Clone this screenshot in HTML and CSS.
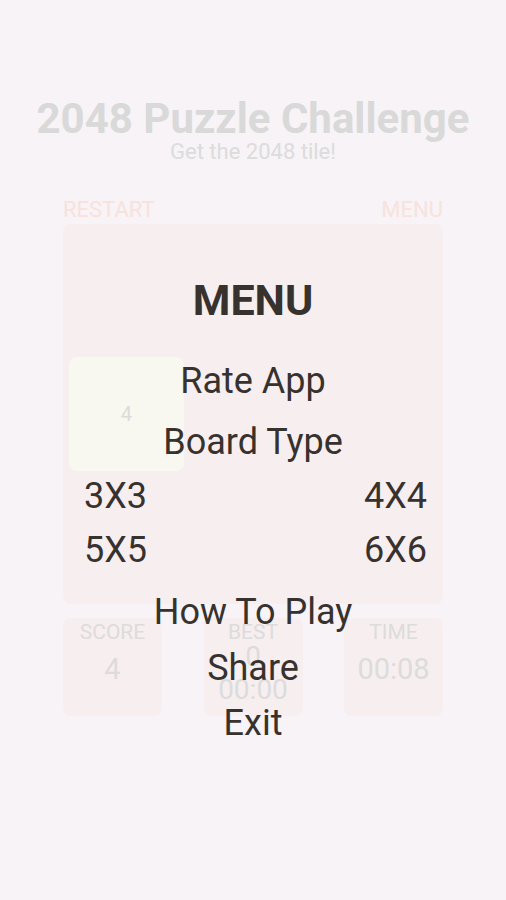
FILE: index.html
```html
<!DOCTYPE html>
<html lang="en">
<head>
  <meta charset="UTF-8">
  <meta name="viewport" content="width=device-width, initial-scale=1.0">
  <title>2048 Puzzle Challenge</title>
  <link rel="stylesheet" href="styles.css">
</head>
<body>

<div class="game">
  <h1 class="title">2048 Puzzle Challenge</h1>
  <div class="subtitle">Get the 2048 tile!</div>

  <!-- top buttons -->
  <div class="actions">
    <span class="action">RESTART</span>
    <span class="action">MENU</span>
  </div>

  <!-- board -->
  <div class="board">
    <div class="cell"></div>
    <div class="cell"></div>
    <div class="cell"></div>
    <div class="cell tile">4</div>
    <div class="cell"></div>
    <div class="cell"></div>
    <div class="cell"></div>
    <div class="cell"></div>
    <div class="cell"></div>
  </div>

  <!-- stats -->
  <div class="stats">
    <div class="stat">
      <div class="stat-label">SCORE</div>
      <div class="stat-value">4</div>
    </div>
    <div class="stat">
      <div class="stat-label">BEST</div>
      <div class="stat-small">0</div>
      <div class="stat-small">00:00</div>
    </div>
    <div class="stat">
      <div class="stat-label">TIME</div>
      <div class="stat-value">00:08</div>
    </div>
  </div>
</div>

<!-- menu overlay -->
<div class="menu">
  <div class="menu-title">MENU</div>
  <div class="menu-item rate">Rate App</div>
  <div class="menu-item board-type">Board Type</div>
  <div class="sizes">
    <span>3X3</span>
    <span>4X4</span>
    <span>5X5</span>
    <span>6X6</span>
  </div>
  <div class="menu-item how">How To Play</div>
  <div class="menu-item share">Share</div>
  <div class="menu-item exit">Exit</div>
</div>

</body>
</html>
```

FILE: styles.css
```css
body {
  margin: 0;
  padding: 0;
  width: 506px;
  height: 900px;
  background-color: #f7f3f6;
  font-family: Roboto, "Liberation Sans", sans-serif;
  position: relative;
  overflow: hidden;
}
.game {
  width: 380px;
  margin: 0 auto;
  padding-top: 97px;
}
.title {
  margin: 0 -60px;
  text-align: center;
  font-size: 42px;
  line-height: 44px;
  font-weight: bold;
  color: #d9d9d9;
}
.subtitle {
  text-align: center;
  font-size: 22px;
  line-height: 22px;
  color: #dcdcdc;
}
.actions {
  display: flex;
  justify-content: space-between;
  margin-top: 35px;
  line-height: 24px;
}
.action {
  font-size: 22px;
  color: #f7e2dd;
}
.board {
  margin-top: 2px;
  height: 380px;
  box-sizing: border-box;
  padding: 6px;
  display: grid;
  grid-template-columns: repeat(3, 1fr);
  grid-template-rows: repeat(3, 1fr);
  gap: 12px;
  background-color: #f7eef0;
  border-radius: 8px;
}
.cell {
  border-radius: 8px;
}
.tile {
  display: flex;
  align-items: center;
  justify-content: center;
  background-color: #f8f7f0;
  font-size: 20px;
  color: #dcdcdc;
}
.stats {
  display: flex;
  justify-content: space-between;
  margin-top: 14px;
}
.stat {
  width: 99px;
  height: 98px;
  background-color: #f7eef0;
  border-radius: 8px;
  text-align: center;
  color: #dcdcdc;
}
.stat-label {
  font-size: 21px;
  line-height: 28px;
}
.stat-value {
  font-size: 29px;
  line-height: 46px;
}
.stat-small {
  font-size: 28px;
  line-height: 22px;
  margin-bottom: 11px;
}

/* menu layer */
.menu {
  position: absolute;
  top: 0;
  left: 63px;
  width: 380px;
  padding-top: 270px;
  display: flex;
  flex-direction: column;
  align-items: center;
  color: #37322e;
}
.menu-title {
  font-size: 43px;
  line-height: 60px;
  font-weight: bold;
}
.menu-item {
  font-size: 36px;
  line-height: 54px;
}
.rate {
  margin-top: 24px;
}
.board-type {
  margin-top: 7px;
}
.sizes {
  align-self: stretch;
  display: grid;
  grid-template-columns: 1fr 1fr;
  padding: 0 16px 0 21px;
  font-size: 36px;
  line-height: 54px;
}
.sizes span:nth-child(even) {
  text-align: right;
}
.how {
  margin-top: 8px;
}
.share {
  margin-top: 2px;
}
.exit {
  margin-top: 1px;
}
```
